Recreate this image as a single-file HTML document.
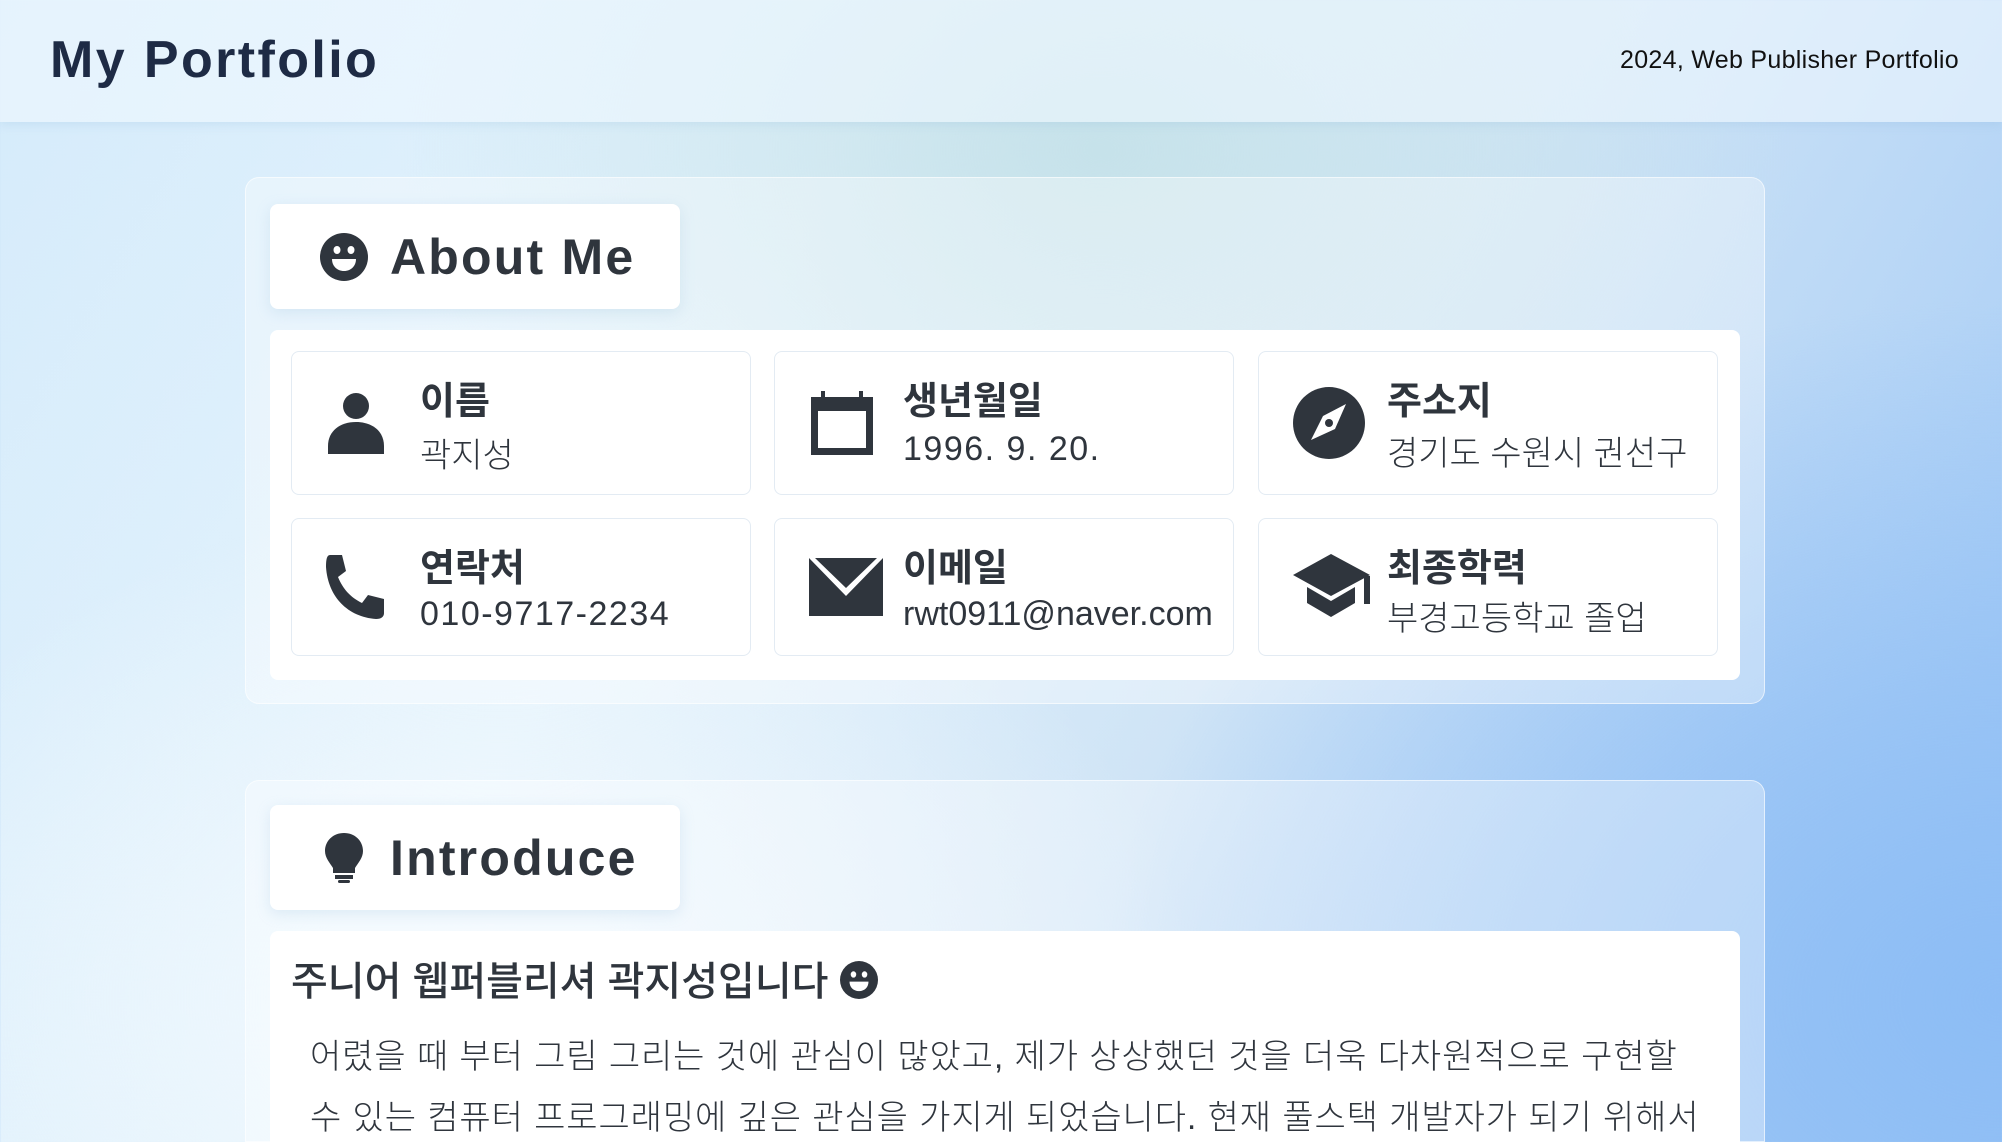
<!DOCTYPE html>
<html><head><meta charset="utf-8"><style>
*{margin:0;padding:0;box-sizing:border-box}
html,body{width:2002px;height:1142px;overflow:hidden}
body{font-family:"Liberation Sans","Noto Sans CJK KR",sans-serif;color:#2f353d;position:relative;
background:
radial-gradient(ellipse 900px 700px at 2002px 1000px,#8dbdf5 0%,rgba(141,189,245,0.6) 45%,rgba(141,189,245,0) 100%),
radial-gradient(ellipse 700px 500px at 1100px 150px,#c6e2ea 0%,rgba(198,226,234,0) 100%),
radial-gradient(ellipse 700px 500px at 500px 1000px,#f2f9fe 0%,rgba(242,249,254,0) 100%),
linear-gradient(120deg,#d5ebfb 0%,#e4f3fc 35%,#cfe4f6 60%,#9cc6f5 100%);}
.hdr{position:absolute;left:0;top:0;width:2002px;height:122px;background:rgba(240,249,255,0.6);box-shadow:0 2px 10px rgba(120,170,210,0.2)}
.hdr h1{position:absolute;left:50px;top:30px;font-size:52px;font-weight:900;color:#1e2b45;letter-spacing:2.4px}
.hdr .r{position:absolute;right:43px;top:46px;font-size:25px;letter-spacing:0.3px;color:#111}
.sec{position:absolute;left:245px;width:1520px;border-radius:14px;background:rgba(255,255,255,0.35);border:1px solid rgba(255,255,255,0.6)}
.tb{position:absolute;left:24px;width:410px;height:105px;background:#fff;border-radius:8px;box-shadow:0 4px 14px rgba(150,190,220,0.25);display:flex;align-items:center;padding-left:50px}
.tb .ic{width:48px;display:flex;justify-content:center}
.tb span{font-size:50px;font-weight:900;color:#2f353d;margin-left:22px;letter-spacing:2.2px}
.panel{position:absolute;left:24px;width:1470px;background:#fff;border-radius:8px}
.card{position:absolute;width:460px;border:1px solid #e3ebf3;border-radius:8px;background:#fff}
.card svg{position:absolute;left:34px;top:50%;transform:translateY(-50%)}
.card .l{position:absolute;left:128px;font-size:38px;font-weight:700;color:#2f353d}
.card .v{position:absolute;left:128px;font-size:34px;color:#2f353d;font-weight:300}
.sp{letter-spacing:1.5px}
</style></head><body>
<div class="hdr"><h1>My Portfolio</h1><div class="r">2024, Web Publisher Portfolio</div></div>

<div class="sec" style="top:177px;height:527px">
 <div class="tb" style="top:26px">
  <div class="ic"><svg width="48" height="48" viewBox="0 0 48 48"><circle cx="24" cy="24" r="24" fill="#2f353d"/><ellipse cx="17" cy="17" rx="3.5" ry="4" fill="#fff"/><ellipse cx="31" cy="17" rx="3.5" ry="4" fill="#fff"/><path d="M12 26h24c0 7-5 12-12 12s-12-5-12-12z" fill="#fff"/></svg></div>
  <span>About Me</span></div>
 <div class="panel" style="top:152px;height:350px"></div>
</div>

<div class="card" style="left:291px;top:351px;height:144px">
 <svg width="60" height="62" viewBox="0 0 60 62"><circle cx="30" cy="14" r="13" fill="#2f353d"/><path d="M2 62v-8c0-15 12-24 28-24s28 9 28 24v8z" fill="#2f353d"/></svg>
 <div class="l" style="top:18px">이름</div><div class="v" style="top:76px">곽지성</div></div>
<div class="card" style="left:774px;top:351px;height:144px">
 <svg width="66" height="64" viewBox="0 0 66 64"><rect x="2" y="6" width="62" height="58" fill="#2f353d"/><rect x="9" y="20" width="48" height="37" fill="#fff"/><rect x="12" y="0" width="4" height="8" fill="#2f353d"/><rect x="50" y="0" width="4" height="8" fill="#2f353d"/></svg>
 <div class="l" style="top:18px">생년월일</div><div class="v sp" style="top:78px">1996. 9. 20.</div></div>
<div class="card" style="left:1258px;top:351px;height:144px">
 <svg width="72" height="72" viewBox="0 0 72 72"><circle cx="36" cy="36" r="36" fill="#2f353d"/><path d="M53 17L42 42 18 53 30 29z" fill="#fff"/><circle cx="36" cy="36" r="4" fill="#2f353d"/></svg>
 <div class="l" style="top:18px">주소지</div><div class="v" style="top:74px">경기도 수원시 권선구</div></div>

<div class="card" style="left:291px;top:518px;height:138px">
 <svg width="66" height="68" viewBox="0 0 66 68"><path d="M4 2h12l4 16-8 6c5 12 12 20 24 26l6-8 16 4v14c0 4-3 6-8 6C22 64 2 44 0 14 0 6 1 2 4 2z" fill="#2f353d"/></svg>
 <div class="l" style="top:18px">연락처</div><div class="v sp" style="top:76px">010-9717-2234</div></div>
<div class="card" style="left:774px;top:518px;height:138px">
 <svg width="74" height="58" viewBox="0 0 74 58"><path d="M0 0L37 38 74 0V58H0z" fill="#2f353d"/><path d="M6 0h62L37 30z" fill="#2f353d"/></svg>
 <div class="l" style="top:18px">이메일</div><div class="v" style="top:76px">rwt0911@naver.com</div></div>
<div class="card" style="left:1258px;top:518px;height:138px">
 <svg width="80" height="66" viewBox="0 0 80 66"><path d="M0 21L38 0 77 21 38 42z" fill="#2f353d"/><path d="M14 33v16l24 14 24-14V33L38 47z" fill="#2f353d"/><rect x="71" y="22" width="6" height="28" fill="#2f353d"/></svg>
 <div class="l" style="top:18px">최종학력</div><div class="v" style="top:72px">부경고등학교 졸업</div></div>

<div class="sec" style="top:780px;height:362px;border-bottom-left-radius:0;border-bottom-right-radius:0">
 <div class="tb" style="top:24px">
  <div class="ic"><svg width="38" height="50" viewBox="0 0 38 50"><path d="M19 0C8 0 0 8 0 18c0 7 5 12 8 17v5h22v-5c3-5 8-10 8-17C38 8 30 0 19 0z" fill="#2f353d"/><rect x="10" y="42" width="18" height="4" fill="#2f353d"/><rect x="13" y="47" width="12" height="3" rx="1.5" fill="#2f353d"/></svg></div>
  <span>Introduce</span></div>
 <div class="panel" style="top:150px;height:212px;border-bottom-left-radius:0;border-bottom-right-radius:0">
  <div style="position:absolute;left:21px;top:18px;font-size:40px;font-weight:500;color:#2f353d;white-space:nowrap">주니어 웹퍼블리셔 곽지성입니다 <svg width="38" height="38" viewBox="0 0 48 48" style="vertical-align:-4px"><circle cx="24" cy="24" r="24" fill="#2f353d"/><ellipse cx="17" cy="17" rx="3.5" ry="4" fill="#fff"/><ellipse cx="31" cy="17" rx="3.5" ry="4" fill="#fff"/><path d="M12 26h24c0 7-5 12-12 12s-12-5-12-12z" fill="#fff"/></svg></div>
  <div style="position:absolute;left:40px;top:96px;width:1430px;font-size:34px;line-height:61px;font-weight:300;color:#2f353d;letter-spacing:0.9px;white-space:nowrap">어렸을 때 부터 그림 그리는 것에 관심이 많았고, 제가 상상했던 것을 더욱 다차원적으로 구현할<br>수 있는 컴퓨터 프로그래밍에 깊은 관심을 가지게 되었습니다. 현재 풀스택 개발자가 되기 위해서</div>
 </div>
</div>
</body></html>
